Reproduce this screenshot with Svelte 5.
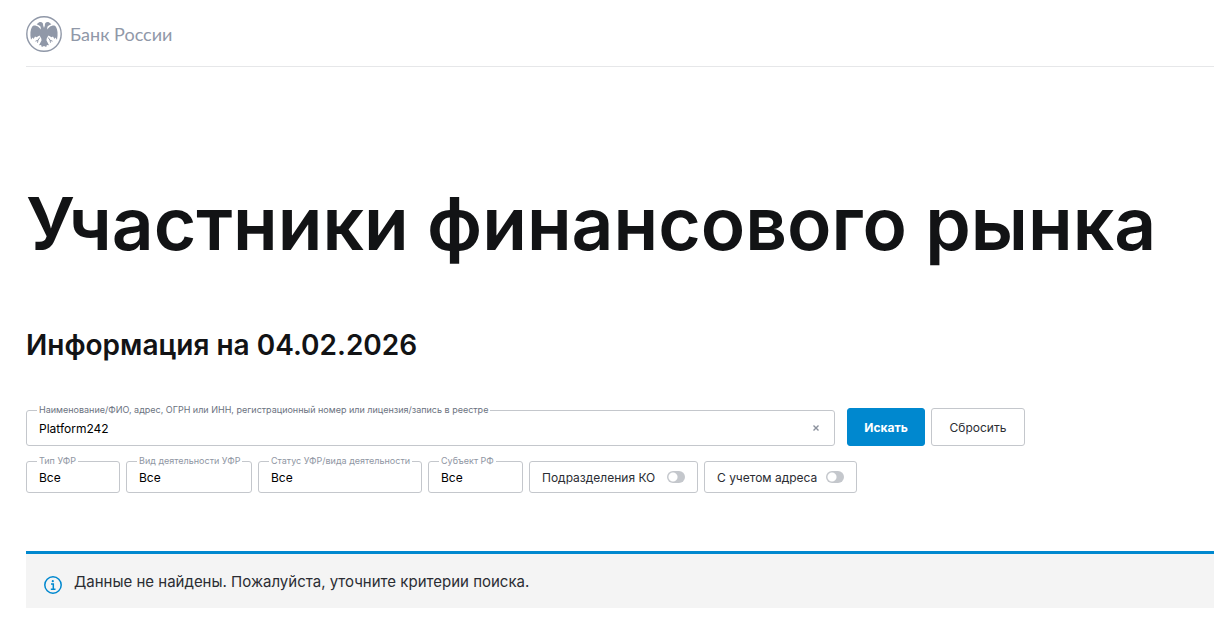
<script lang="ts">
  type Filter = { id: string; label: string; width: number };

  const filters: Filter[] = [
    { id: 'type', label: 'Тип УФР', width: 94 },
    { id: 'activity', label: 'Вид деятельности УФР', width: 126 },
    { id: 'status', label: 'Статус УФР/вида деятельности', width: 164 },
    { id: 'region', label: 'Субъект РФ', width: 95 },
  ];

  const toggles = [
    { id: 'branches', label: 'Подразделения КО', width: 169 },
    { id: 'address', label: 'С учетом адреса', width: 153 },
  ];

  let query = $state('Platform242');
</script>

<div class="page">
  <header class="header">
    <a class="logo" href="/">
      <svg class="logo-icon" viewBox="0 0 36 36" aria-hidden="true">
        <circle cx="18" cy="18" r="17.2" fill="none" stroke="#9098a8" stroke-width="1.4" />
        <g fill="#9098a8">
          <!-- Wings -->
          <path d="M12.500 11C9.800 9 7.300 9 6.100 10.700C4.300 13.500 3.900 18 5 23.800L6.600 21.500L7.600 23L9 20.500L10.500 21.300L13.500 19.500L15.500 22.500H20.500L22.500 19.500L25.500 21.300L27 20.500L28.400 23L29.400 21.500L31 23.800C32.100 18 31.700 13.500 29.900 10.700C28.700 9 26.200 9 23.500 11L20.500 14H15.500Z" />
          <!-- Heads -->
          <path d="M15 15L14.600 10.800L13.200 9.500L10.600 8.300L12.800 6.400C15.500 5.200 17.500 7 17.100 9.300L18 12L18.900 9.300C18.500 7 20.500 5.200 23.200 6.400L25.400 8.300L22.800 9.500L21.400 10.800L21 15Z" />
          <!-- Tail -->
          <path d="M15.200 21H20.800L20.500 24.500L23 29.300L20.900 29L20.200 31L18 30L15.800 31L15.100 29L13 29.300L15.500 24.500Z" />
        </g>
        <!-- Claws -->
        <path d="M13.800 21.500L12 24.200L9.500 25.200M12 24.200L11.500 26.700M22.200 21.500L24 24.200L26.500 25.200M24 24.200L24.500 26.700" fill="none" stroke="#9098a8" stroke-width="1" />
      </svg>
      <span>Банк России</span>
    </a>
  </header>

  <main>
    <h1>Участники финансового рынка</h1>
    <h2>Информация на 04.02.2026</h2>

    <form onsubmit={(e) => e.preventDefault()}>
      <div class="search-row">
        <div class="field search">
          <label for="query">Наименование/ФИО, адрес, ОГРН или ИНН, регистрационный номер или лицензия/запись в реестре</label>
          <input id="query" type="text" bind:value={query} />
          <button class="clear" type="button" aria-label="Очистить" onclick={() => (query = '')}>
            <svg viewBox="0 0 6 6" aria-hidden="true">
              <path d="M.5 .5l5 5M5.500 .5l-5 5" stroke="#8a909c" stroke-width="1.4" />
            </svg>
          </button>
        </div>
        <div class="actions">
          <button class="btn primary" type="submit">Искать</button>
          <button class="btn" type="reset">Сбросить</button>
        </div>
      </div>

      <div class="filters">
        {#each filters as f}
          <div class="field filter" style="width: {f.width}px">
            <label for={f.id}>{f.label}</label>
            <select id={f.id}>
              <option>Все</option>
            </select>
          </div>
        {/each}
        {#each toggles as t}
          <label class="toggle" for={t.id} style="width: {t.width}px">
            <span>{t.label}</span>
            <input id={t.id} type="checkbox" role="switch" />
          </label>
        {/each}
      </div>
    </form>

    <div class="notice">
      <svg class="notice-icon" viewBox="0 0 18 18" fill="none" aria-hidden="true">
        <circle cx="9" cy="9" r="8.2" stroke="#0088cf" stroke-width="1.5" />
        <circle cx="8.800" cy="5.200" r="1.100" fill="#0088cf" />
        <path d="M7 8h2.300v5M6.800 13.200h4.700" stroke="#0088cf" stroke-width="1.500" />
      </svg>
      <p>Данные не найдены. Пожалуйста, уточните критерии поиска.</p>
    </div>
  </main>
</div>

<style>
  :global(body) {
    margin: 0;
    background: #fff;
  }

  .page {
    padding-left: 26px;
    font-family: Inter, 'Noto Sans', sans-serif;
    color: #121315;
  }

  .header {
    padding: 16px 0 14px;
    border-bottom: 1px solid #e6e7e9;
  }

  .logo {
    display: inline-flex;
    align-items: center;
    gap: 8px;
    vertical-align: top;
    font-family: Lato, sans-serif;
    font-size: 18px;
    line-height: 34px;
    color: #9098a8;
    text-decoration: none;
  }

  .logo-icon {
    width: 36px;
    height: 36px;
  }

  h1 {
    margin: 112px 0 0;
    font-size: 73px;
    font-weight: 600;
    line-height: 90px;
  }

  h2 {
    margin: 58px 0 0;
    font-size: 28px;
    font-weight: 600;
    line-height: 36px;
  }

  form {
    margin-top: 45px;
  }

  .search-row {
    display: flex;
    align-items: flex-end;
    gap: 12px;
    max-width: 999px;
  }

  .field {
    position: relative;
    box-sizing: border-box;
    border: 1px solid #c4c7cc;
    border-radius: 3px;
  }

  .field label {
    position: absolute;
    top: -7px;
    left: 10px;
    padding: 0 2px;
    background: #fff;
    font-size: 9px;
    line-height: 12px;
    color: #8f96a3;
    white-space: nowrap;
  }

  .field.search label {
    color: #6b7280;
  }

  .search {
    display: flex;
    align-items: center;
    flex: 1;
    height: 36px;
  }

  .field input,
  .field select {
    box-sizing: border-box;
    width: 100%;
    height: 100%;
    padding: 0 12px;
    border: none;
    outline: none;
    appearance: none;
    background: transparent;
    font-family: inherit;
    font-size: 12px;
    color: #000;
  }

  .clear {
    display: flex;
    padding: 15px;
    border: none;
    background: none;
    cursor: pointer;
  }

  .clear svg {
    width: 6px;
    height: 6px;
  }

  .actions {
    display: flex;
    gap: 6px;
  }

  .btn {
    box-sizing: border-box;
    width: 94px;
    height: 38px;
    padding: 0;
    border: 1px solid #c4c7cc;
    border-radius: 3px;
    background: #fff;
    font-family: inherit;
    font-size: 12px;
    color: #2b2d33;
    cursor: pointer;
  }

  .btn.primary {
    width: 78px;
    border-color: #0088cf;
    background: #0088cf;
    font-weight: 700;
    color: #fff;
  }

  .filters {
    display: flex;
    flex-wrap: wrap;
    gap: 6px;
    margin-top: 15px;
  }

  .filter {
    height: 32px;
  }

  .toggle {
    display: flex;
    align-items: center;
    justify-content: space-between;
    box-sizing: border-box;
    height: 32px;
    padding: 0 12px;
    border: 1px solid #c4c7cc;
    border-radius: 3px;
    font-size: 12px;
    color: #2b2d33;
    white-space: nowrap;
    cursor: pointer;
  }

  .toggle input {
    width: 18px;
    height: 12px;
    margin: 0;
    border-radius: 6px;
    appearance: none;
    background: radial-gradient(circle at 6px 6px, #fff 4px, #c4c7cc 5px);
  }

  .toggle input:checked {
    background: radial-gradient(circle at 12px 6px, #fff 4px, #0088cf 5px);
  }

  .notice {
    display: flex;
    align-items: flex-end;
    gap: 12px;
    margin-top: 58px;
    padding: 16px 18px 14px;
    border-top: 3px solid #0088cf;
    background: #f4f4f4;
    font-size: 15px;
    line-height: 24px;
    color: #2b2d33;
  }

  .notice-icon {
    flex-shrink: 0;
    width: 18px;
    height: 18px;
  }

  .notice p {
    margin: 0;
  }
</style>
